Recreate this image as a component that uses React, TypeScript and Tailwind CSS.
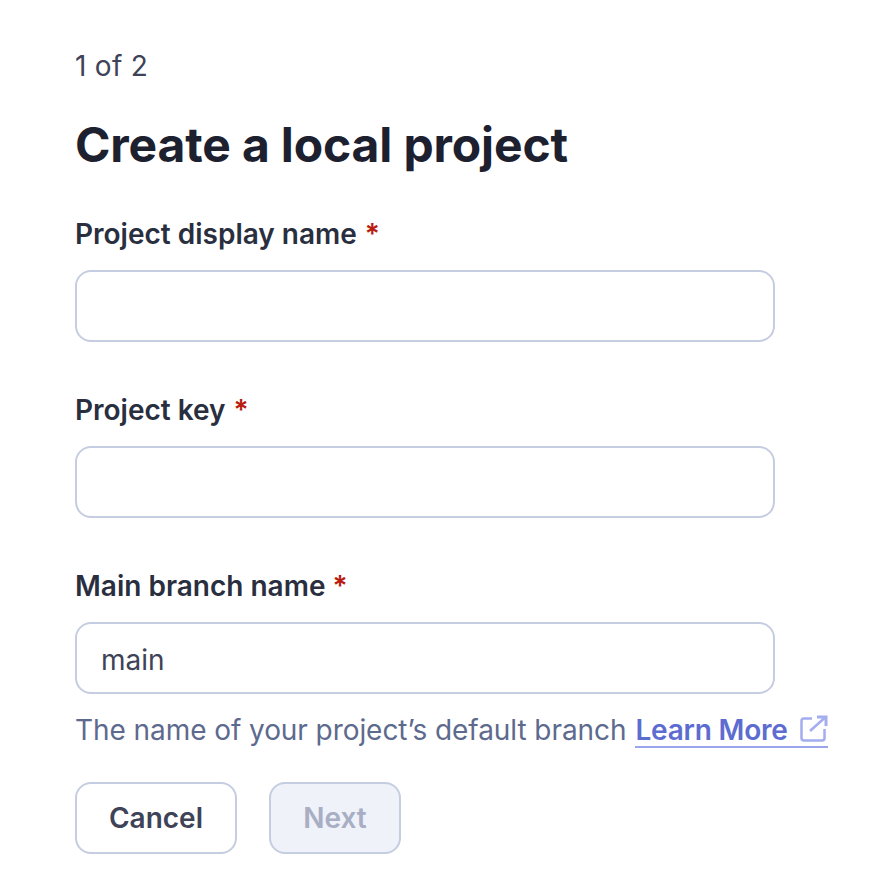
import { type ReactNode } from 'react'

function Field({ label, gap, value, children }: { label: string; gap: string; value?: string; children?: ReactNode }) {
  return (
    <div className="flex flex-col">
      <label className="flex h-[40px] items-center text-[28px] font-semibold text-[#2a2f40]">
        {label}
        <span className={`${gap} text-[#b81c0f]`}>*</span>
      </label>
      <input
        readOnly
        value={value ?? ''}
        className="mt-[16px] h-[72px] w-[700px] rounded-[16px] border-2 border-[#c5cde0] bg-white px-[24px] pt-[4px] text-[28px] text-[#3e4357] outline-none"
      />
      {children}
    </div>
  )
}

export default function App() {
  return (
    <div className="h-[882px] w-[874px] overflow-hidden bg-white pl-[75px] pt-[46px] font-['Inter',sans-serif]">
      <p className="h-[40px] text-[28px] leading-[40px] tracking-[0.3px] text-[#3e4357]">1 of 2</p>
      <h1 className="mt-[27px] h-[64px] text-[48px] font-bold leading-[64px] tracking-[-0.14px] text-[#1d212f]">
        Create a local project
      </h1>

      <div className="mt-[37px] flex flex-col gap-[48px]">
        <Field label="Project display name" gap="ml-[8px]" />
        <Field label="Project key" gap="ml-[8px]" />
        <Field label="Main branch name" gap="ml-[7px]" value="main">
          <p className="mt-[16px] flex h-[40px] items-center whitespace-nowrap text-[28px] tracking-[-0.07px] text-[#5d6a8e]">
            The name of your project’s default branch
            <a className="ml-[9px] flex h-[38px] items-center gap-[12px] self-start border-b-2 border-[#9ba6ea] pt-[4px] font-semibold tracking-[-0.2px] text-[#5d6cd0]">
              Learn More
              <svg className="-mt-[2px]" width="28" height="28" viewBox="0 0 28 28" fill="none" stroke="#a3adf0" strokeWidth="2.5">
                <path d="M12 3.5H4a2.5 2.5 0 0 0-2.5 2.5v17A2.5 2.5 0 0 0 4 25.5h18a2.5 2.5 0 0 0 2.5-2.5V14" />
                <path d="M10 16 24.5 3" />
                <path d="M17 2h9v9" strokeWidth="3" />
              </svg>
            </a>
          </p>
        </Field>
      </div>

      <div className="mt-[32px] flex gap-[32px]">
        <button className="h-[72px] w-[162px] rounded-[16px] border-2 border-[#c5cde0] bg-white text-[28px] font-semibold text-[#3e4357]">
          Cancel
        </button>
        <button className="h-[72px] w-[132px] rounded-[16px] border-2 border-[#c5cde0] bg-[#eff2f9] text-[28px] font-semibold text-[#a8aec4]">
          Next
        </button>
      </div>
    </div>
  )
}
